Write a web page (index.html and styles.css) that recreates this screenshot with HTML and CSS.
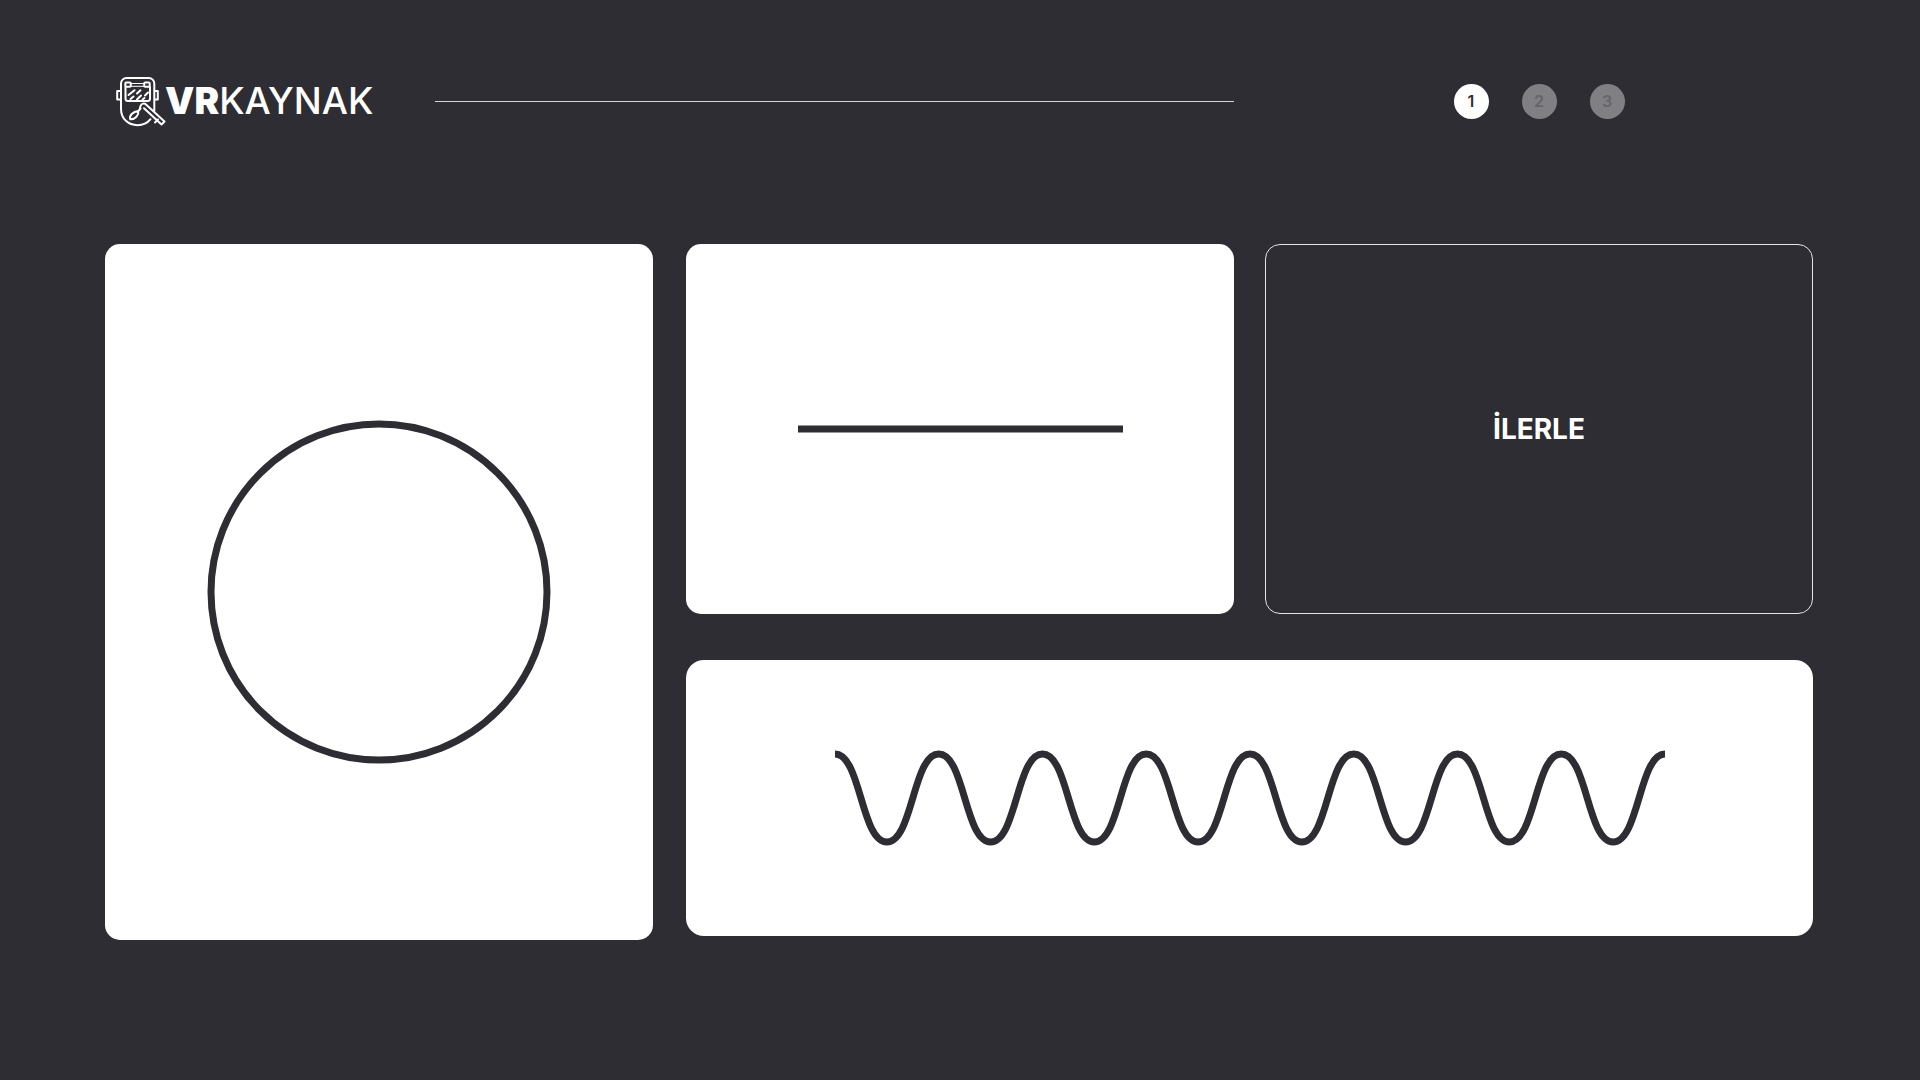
FILE: index.html
```html
<!DOCTYPE html>
<html lang="tr">
<head>
<meta charset="utf-8">
<meta name="viewport" content="width=device-width, initial-scale=1">
<title>VRKaynak</title>
<link rel="stylesheet" href="styles.css">
</head>
<body>
<div class="page">
  <header class="header">
    <div class="header-main">
      <a class="brand" href="#">
        <svg class="brand-icon" viewBox="10 10 50 52" aria-hidden="true">
          <path d="M49.300 46V18.500a5.500 5.500 0 0 0-5.500-5.500h-22.300a5.500 5.500 0 0 0-5.500 5.500V44c0 10 7.500 16.200 16.500 16.200 5.500 0 10-2.200 13-6"/>
          <path d="M15.500 26H12.200v8.500h3.300M49.800 26h3v8.500h-3"/>
          <path d="M20.500 22v11.500a2.500 2.500 0 0 0 2.500 2.500h19.500a2.500 2.500 0 0 0 2.500-2.500V22"/>
          <path class="thin" d="M26 18.500h13M26 21.300h13"/>
          <rect x="20.300" y="17.500" width="5.500" height="4.300" rx="1"/>
          <rect x="39.200" y="17.500" width="5.500" height="4.300" rx="1"/>
          <path d="M23.500 30l6-4.800M25.500 34l3-2.500M32 28.500l3.500-3.200M32 34.500l4-4M37.500 34.500l2-1.500M40 30.500l3-3"/>
          <path d="M25.300 54.300c-1.300-3.600 2.500-7.600 8-8.300.7 4-3 8.500-8 8.300zM32.500 47l3-3.500M34.500 45l1-4c1-2.700 4-3.200 5.500-1.500l18.500 17-3 3-17.500-16.200M53 54.500l-3 3M56.500 59.500"/>
        </svg>
        <span class="brand-name"><strong>VR</strong>KAYNAK</span>
      </a>
      <div class="rule"></div>
    </div>
    <nav class="steps" aria-label="Adımlar">
      <button class="step step-active" type="button" aria-current="step">1</button>
      <button class="step" type="button">2</button>
      <button class="step" type="button">3</button>
    </nav>
  </header>

  <main class="board">
    <button class="card card-circle" type="button" aria-label="Daire">
      <svg class="shape" width="344" height="344" viewBox="0 0 344 344"><circle cx="172" cy="172" r="168"/></svg>
    </button>
    <div class="side">
      <button class="card card-line" type="button" aria-label="Düz çizgi">
        <svg class="shape" width="325" height="8" viewBox="0 0 325 8"><path d="M0 4h325"/></svg>
      </button>
      <button class="card card-next" type="button">İLERLE</button>
      <button class="card card-wave" type="button" aria-label="Dalga">
        <svg class="shape" width="830" height="96" viewBox="0 0 832 96">
          <path d="M0 4C26 4 26 92 52 92S78 4 104 4S130 92 156 92S182 4 208 4S234 92 260 92S286 4 312 4S338 92 364 92S390 4 416 4S442 92 468 92S494 4 520 4S546 92 572 92S598 4 624 4S650 92 676 92S702 4 728 4S754 92 780 92S806 4 832 4"/>
        </svg>
      </button>
    </div>
  </main>
</div>
</body>
</html>
```
FILE: styles.css
```css
* {
  box-sizing: border-box;
}

body {
  margin: 0;
  background: #2e2d33;
  color: #fff;
  font-family: Inter, "Liberation Sans", sans-serif;
}

.page {
  min-height: 100vh;
  padding: 75px 107px 75px 105px;
}

.header {
  display: grid;
  grid-template-columns: 1129fr 548fr;
  column-gap: 31px;
  align-items: center;
}

.header-main {
  display: flex;
  align-items: center;
}

.brand {
  display: flex;
  align-items: center;
  flex: 0 0 330px;
  padding-left: 10px;
  color: inherit;
  text-decoration: none;
}

.brand-icon {
  flex: none;
  width: 50px;
  height: 52px;
  overflow: visible;
  fill: none;
  stroke: #fff;
  stroke-width: 2;
  stroke-linecap: round;
  stroke-linejoin: round;
}

.thin {
  stroke-width: 1;
}

.brand-name {
  font-size: 37px;
  line-height: 52px;
  font-weight: 500;
}

.brand-name strong {
  font-weight: 900;
}

.rule {
  flex: 1;
  height: 1px;
  background: #d5d5d6;
}

.steps {
  display: flex;
  justify-content: center;
  gap: 33px;
}

.step {
  width: 35px;
  height: 35px;
  padding: 0;
  border: 0;
  border-radius: 50%;
  background: #807f84;
  color: #656469;
  font: 600 16px/35px Inter, "Liberation Sans", sans-serif;
}

.step-active {
  background: #fff;
  color: #2e2d33;
}

.board {
  display: grid;
  grid-template-columns: 548fr 1127fr;
  column-gap: 33px;
  align-items: start;
  margin-top: 117px;
}

.side {
  display: grid;
  grid-template-columns: 1fr 1fr;
  gap: 46px 31px;
}

.card {
  display: flex;
  align-items: center;
  justify-content: center;
  min-width: 0;
  min-height: 370px;
  padding: 0;
  border: 0;
  border-radius: 15px;
  background: #fff;
}

.card-circle {
  min-height: 696px;
}

.card-next {
  border: 1px solid #e4e4e5;
  background: transparent;
  color: #fff;
  font: 700 28px/32px Inter, "Liberation Sans", sans-serif;
}

.card-wave {
  grid-column: 1 / -1;
  min-height: 276px;
  border-radius: 18px;
}

.shape {
  max-width: 80%;
  fill: none;
  stroke: #2e2d33;
  stroke-width: 7;
}
```
